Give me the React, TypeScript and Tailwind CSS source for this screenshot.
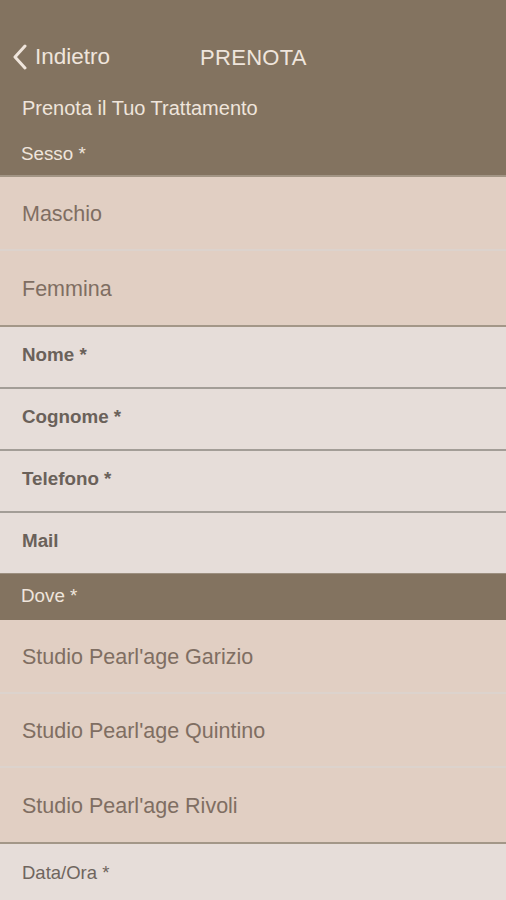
import React from "react";

const font = { fontFamily: '"Liberation Sans", Arial, sans-serif' };

function OptionRow({ label, last }: { label: string; last?: boolean }) {
  return (
    <div
      className={`h-[74px] flex items-center pl-[22px] bg-[#e1cfc3] text-[21.5px] text-[#7f6e62] ${
        last ? "" : "border-b-2 border-[#dcd3cd]"
      }`}
    >
      <span className="mt-[3px]">{label}</span>
    </div>
  );
}

function InputRow({ label, bold = true }: { label: string; bold?: boolean }) {
  return (
    <div
      className={`h-[60px] flex items-center pl-[22px] bg-[#e6ddd9] ${
        bold ? "font-bold text-[18.8px] text-[#6a615a]" : "text-[18.5px] text-[#6f655e]"
      }`}
    >
      <span className="-mt-[3px]">{label}</span>
    </div>
  );
}

export default function App() {
  return (
    <div className="w-[506px] h-[900px] overflow-hidden bg-[#e6ddd9]" style={font}>
      <div className="bg-[#837360] flex flex-col pt-[35px] text-[#efe5dc]">
        <div className="h-[44px] relative flex items-center">
          <div className="flex items-center pl-[11px]">
            <svg width="18" height="26" viewBox="0 0 18 26" className="mr-[6px]">
              <path
                d="M14 2 L4 13 L14 24"
                fill="none"
                stroke="#efe5dc"
                strokeWidth="3"
                strokeLinecap="round"
                strokeLinejoin="round"
              />
            </svg>
            <span className="text-[22.5px]">Indietro</span>
          </div>
          <span className="absolute left-[200px] text-[22px] tracking-[0.3px]">PRENOTA</span>
        </div>
        <div className="h-[58px] flex items-center pl-[22px] text-[20px]">
          Prenota il Tuo Trattamento
        </div>
        <div className="h-[38px] flex items-center pl-[21px] text-[18.8px]">
          <span className="-mt-[4px]">Sesso *</span>
        </div>
      </div>
      <div className="h-[2px] bg-[#a29585]" />
      <OptionRow label="Maschio" />
      <OptionRow label="Femmina" last />
      <div className="h-[2px] bg-[#a39788]" />
      <InputRow label="Nome *" />
      <div className="h-[2px] bg-[#a39d97]" />
      <InputRow label="Cognome *" />
      <div className="h-[2px] bg-[#a39d97]" />
      <InputRow label="Telefono *" />
      <div className="h-[2px] bg-[#a39d97]" />
      <InputRow label="Mail" />
      <div className="h-[47px] bg-[#837360] flex items-center pl-[21px] text-[18.8px] text-[#efe5dc] border-t border-[#9c8f80]">
        <span className="-mt-[2px]">Dove *</span>
      </div>
      <OptionRow label="Studio Pearl'age Garizio" />
      <OptionRow label="Studio Pearl'age Quintino" />
      <OptionRow label="Studio Pearl'age Rivoli" last />
      <div className="h-[2px] bg-[#a39788]" />
      <InputRow label="Data/Ora *" bold={false} />
    </div>
  );
}
